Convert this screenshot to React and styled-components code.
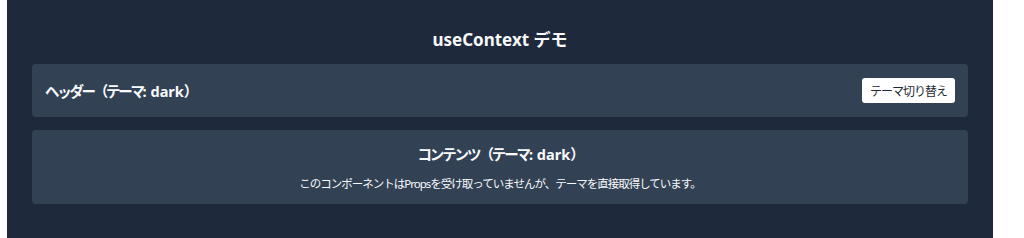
import React, { createContext, useContext, useState } from "react";
import styled, { createGlobalStyle } from "styled-components";

const Global = createGlobalStyle`
  html, body { margin: 0; padding: 0; background: #ffffff; }
  body { font-family: "Noto Sans", "Noto Sans CJK JP", sans-serif; }
`;

const ThemeContext = createContext("dark");

const Page = styled.div`
  padding-left: 7px;
`;

const Panel = styled.div`
  width: 986px;
  min-height: 238px;
  box-sizing: border-box;
  background: #1e293b;
  padding: 28px 25px 20px;
  color: #f8fafc;
`;

const Title = styled.h2`
  margin: 0 0 12px;
  font-size: 17px;
  line-height: 24px;
  font-weight: 700;
  text-align: center;
  color: #f8fafc;
`;

const Card = styled.div`
  background: #334155;
  border-radius: 4px;
  box-sizing: border-box;
  padding: ${(p) => p.$pad};
  margin-bottom: 13px;
`;

const HeaderRow = styled(Card)`
  display: flex;
  align-items: center;
  justify-content: space-between;
`;

const HeaderText = styled.span`
  font-size: 14.5px;
  font-weight: 700;
  line-height: 22px;
  letter-spacing: -2.3px;
`;

const Latin = styled.span`
  letter-spacing: 0;
`;

const ToggleButton = styled.button`
  font-family: "Noto Sans CJK JP", "Noto Sans", sans-serif;
  background: #ffffff;
  color: #1f2937;
  border: none;
  border-radius: 3px;
  height: 25px;
  padding: 0 8px;
  font-size: 12px;
  letter-spacing: -1px;
  cursor: pointer;
`;

const ContentCard = styled(Card)`
  text-align: center;
`;

const ContentTitle = styled.div`
  font-size: 14.5px;
  font-weight: 700;
  line-height: 22px;
  letter-spacing: -2.1px;
  margin-bottom: 10px;
`;

const ContentText = styled.p`
  margin: 0;
  font-size: 11.5px;
  line-height: 18px;
  letter-spacing: -1px;
`;

function Header({ onToggle }) {
  const theme = useContext(ThemeContext);
  return (
    <HeaderRow $pad="14px 13px">
      <HeaderText>
        ヘッダー（テーマ<Latin>: {theme}</Latin>）
      </HeaderText>
      <ToggleButton onClick={onToggle}>テーマ切り替え</ToggleButton>
    </HeaderRow>
  );
}

function Content() {
  const theme = useContext(ThemeContext);
  return (
    <ContentCard $pad="13px 13px 11px">
      <ContentTitle>
        コンテンツ（テーマ<Latin>: {theme}</Latin>）
      </ContentTitle>
      <ContentText>
        このコンポーネントはPropsを受け取っていませんが、テーマを直接取得しています。
      </ContentText>
    </ContentCard>
  );
}

export default function App() {
  const [theme, setTheme] = useState("dark");
  return (
    <ThemeContext.Provider value={theme}>
      <Global />
      <Page>
        <Panel>
          <Title>useContext デモ</Title>
          <Header onToggle={() => setTheme(theme === "dark" ? "light" : "dark")} />
          <Content />
        </Panel>
      </Page>
    </ThemeContext.Provider>
  );
}
